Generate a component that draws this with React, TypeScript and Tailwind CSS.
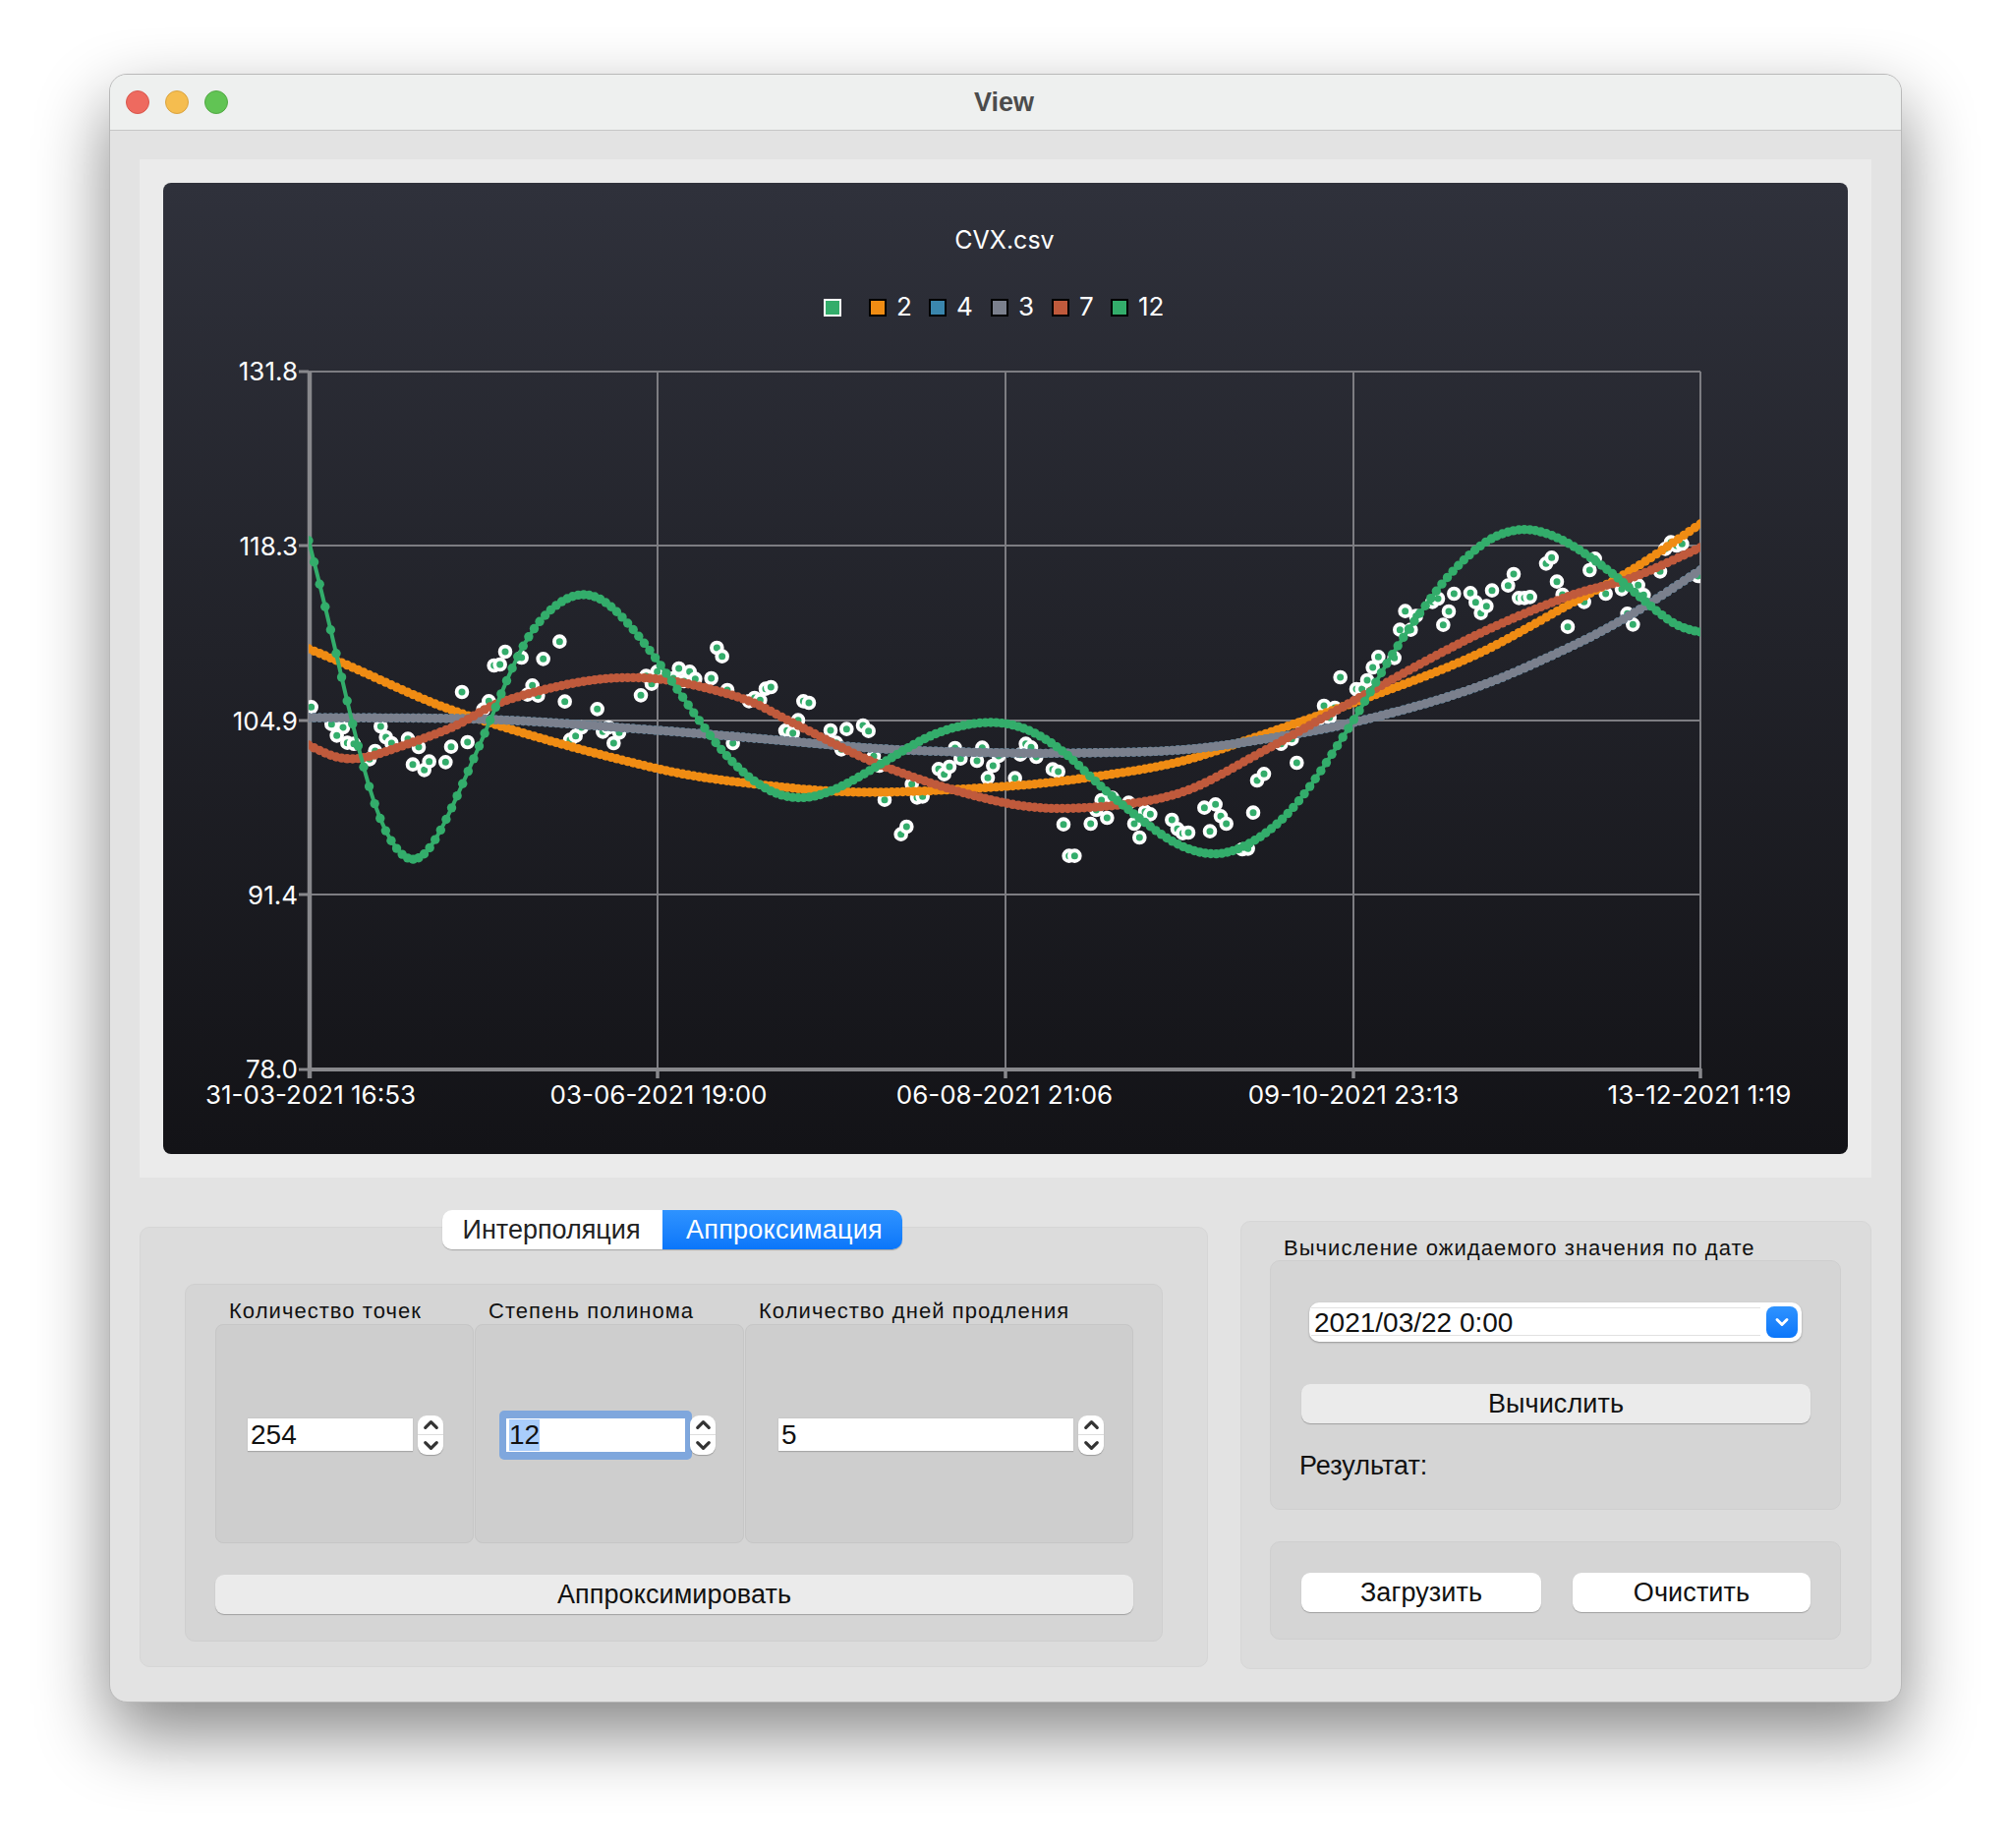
import type { ReactNode } from "react"
import { ChevronDown, ChevronUp } from "lucide-react"

type Pt = [number, number]

// read off the chart by eye, in page coordinates
const ORANGE: Pt[] = [[314,660],[345,673],[467,725],[669,782],[780,799],[880,806],[1023,800],[1100,792],[1200,775],[1280,749],[1377,715],[1500,667],[1600,613],[1660,580],[1730,533]]
const GRAY: Pt[] = [[314,730],[500,732],[669,743],[780,752],[900,762],[1023,766],[1100,766],[1200,763],[1280,753],[1377,735],[1500,700],[1600,657],[1660,625],[1730,580]]
const RED: Pt[] = [[314,758],[340,770],[365,772],[400,762],[467,737],[500,718],[560,700],[620,690],[680,692],[760,712],[800,732],[900,780],[1023,817],[1100,822],[1200,807],[1280,767],[1377,713],[1500,647],[1600,605],[1660,588],[1730,557]]
const GREEN: Pt[] = [[314,550],[332,621],[350,700],[373,793],[390,843],[418,877],[440,860],[465,810],[500,730],[530,660],[560,620],[592,604],[620,615],[660,660],[700,717],[740,770],[780,803],[815,812],[850,803],[900,775],[950,747],[1000,735],[1040,740],[1080,763],[1120,800],[1160,833],[1200,860],[1240,869],[1280,853],[1320,817],[1377,733],[1420,660],[1470,590],[1500,560],[1520,546],[1552,538],[1580,545],[1600,555],[1640,583],[1680,617],[1707,637],[1730,643]]

const ZOOM_A: Pt[] = [[50,538],[112,590],[147,600],[128,625],[160,647],[180,650],[228,697],[245,672],[262,597],[278,630],[295,648],[345,635],[378,660],[360,713],[395,730],[410,704],[460,706],[477,659],[527,645],[510,492],[575,545],[592,520],[608,411],[626,408],[642,369],[692,387],[710,500],[725,472],[742,503],[758,391],[808,338],[824,521],[923,544],[840,638],[857,626],[875,600],[940,613],[957,600],[990,616],[973,648],[1056,502],[1072,443],[1089,467],[1106,430],[1155,450],[1172,420],[1188,459],[1205,430],[1222,452],[1271,450],[1288,357],[1304,383],[1320,486],[1337,648],[1386,520],[1403,510],[1420,517],[1437,482],[1453,477],[1497,610]]
const ZOOM_B: Pt[] = [[62,430],[80,437],[96,398],[112,340],[129,345],[195,429],[212,467],[228,487],[244,425],[294,414],[311,431],[327,508],[344,537],[360,641],[443,593],[459,634],[476,631],[410,746],[427,723],[525,547],[542,563],[558,540],[575,483],[592,515],[642,522],[658,482],[675,574],[691,537],[708,507],[758,575],[774,503],[791,470],[807,481],[823,510],[873,548],[890,555],[906,716],[923,812],[940,812],[989,714],[1006,672],[1022,642],[1039,696],[1055,635],[1105,650],[1122,714],[1138,756],[1155,677],[1171,685],[1237,702],[1254,730],[1270,743],[1287,741],[1336,665],[1353,737],[1370,655],[1386,691],[1403,714],[1452,792],[1469,790],[1485,680],[1497,582]]
const ZOOM_C: Pt[] = [[18,862],[70,770],[103,755],[118,828],[134,712],[184,695],[201,654],[218,690],[234,660],[251,567],[300,603],[317,603],[333,576],[350,537],[367,505],[416,508],[433,422],[449,365],[466,422],[482,380],[532,337],[549,327],[565,407],[582,366],[598,312],[648,310],[664,338],[680,371],[697,350],[714,302],[763,287],[780,252],[796,325],[813,325],[830,322],[879,220],[896,202],[912,275],[929,315],[945,413],[995,337],[1012,240],[1028,205],[1061,312],[1110,298],[1127,373],[1144,406],[1160,286],[1177,316],[1227,244],[1243,175],[1260,155],[1277,165],[1294,160],[1343,258]]

const SCATTER: Pt[] = [
  ...ZOOM_A.map(([x, y]): Pt => [300 + x / 3, 540 + y / 3]),
  ...ZOOM_B.map(([x, y]): Pt => [780 + x / 3, 600 + y / 3]),
  ...ZOOM_C.map(([x, y]): Pt => [1280 + x / 3, 500 + y / 3]),
]

// cubic Hermite in x through the read points, sampled at 254 evenly spaced x
function dots(pts: Pt[]): Pt[] {
  const slope = (i: number) => {
    const a = pts[Math.max(i - 1, 0)]
    const b = pts[Math.min(i + 1, pts.length - 1)]
    return (b[1] - a[1]) / (b[0] - a[0])
  }
  const raw: number[] = []
  let j = 0
  for (let i = 0; i < 254; i++) {
    const x = 314 + (1416 * i) / 253
    while (j < pts.length - 2 && pts[j + 1][0] < x) j++
    const [ax, ay] = pts[j]
    const [bx, by] = pts[j + 1]
    const h = bx - ax
    const t = (x - ax) / h
    raw.push(
      (2 * t ** 3 - 3 * t ** 2 + 1) * ay +
        (t ** 3 - 2 * t ** 2 + t) * h * slope(j) +
        (-2 * t ** 3 + 3 * t ** 2) * by +
        (t ** 3 - t ** 2) * h * slope(j + 1),
    )
  }
  return raw.map((_, i): Pt => {
    const w = Math.min(2, i, 253 - i)
    let sum = 0
    for (let k = i - w; k <= i + w; k++) sum += raw[k]
    return [314 + (1416 * i) / 253, sum / (2 * w + 1)]
  })
}

const X_LINES = [669, 1023, 1377, 1730]
const Y_LINES = [378, 555, 733, 910]
const Y_LABELS: [number, string][] = [
  [387, "131.8"],
  [565, "118.3"],
  [743, "104.9"],
  [920, "91.4"],
  [1097, "78.0"],
]
const X_LABELS: [number, string][] = [
  [316, "31-03-2021 16:53"],
  [670, "03-06-2021 19:00"],
  [1022, "06-08-2021 21:06"],
  [1377, "09-10-2021 23:13"],
  [1729, "13-12-2021 1:19"],
]
const LEGEND: [number, string, string][] = [
  [884, "#f08c13", "2"],
  [945, "#3a86ad", "4"],
  [1008, "#7b808d", "3"],
  [1070, "#c05a3c", "7"],
  [1130, "#33ad6b", "12"],
]

function Series({ pts, color, width }: { pts: Pt[]; color: string; width: number }) {
  const ds = dots(pts)
  return (
    <g>
      <polyline points={ds.map((p) => p.join(",")).join(" ")} fill="none" stroke={color} strokeWidth={width} />
      {ds.map(([x, y], i) => (
        <circle key={i} cx={x} cy={y} r={4.7} fill={color} />
      ))}
    </g>
  )
}

function Chart() {
  return (
    <div className="h-full rounded-lg bg-gradient-to-b from-[#2f313b] to-[#131317] overflow-hidden">
      {/* svg coordinates are page coordinates, so the numbers read off the picture stay readable */}
      <svg viewBox="166 186 1714 988" className="block w-full h-full" style={{ fontFamily: "Inter, sans-serif" }}>
        <defs>
          <clipPath id="plot">
            <rect x="314" y="378" width="1416" height="709" />
          </clipPath>
        </defs>

        <text x="1022" y="253" fill="#fff" fontSize="25" textAnchor="middle">CVX.csv</text>

        <rect x="839" y="305" width="16" height="16" fill="#33ad6b" stroke="#fff" strokeWidth="2" />
        {LEGEND.map(([x, color, label]) => (
          <g key={label}>
            <rect x={x + 1} y="305" width="16" height="16" fill={color} stroke="#000" strokeWidth="2" />
            <text x={x + 28} y="321" fill="#fff" fontSize="26">{label}</text>
          </g>
        ))}

        {X_LINES.map((x) => (
          <line key={x} x1={x} x2={x} y1="378" y2="1087" stroke="#7d7d82" strokeWidth="2" />
        ))}
        {Y_LINES.map((y) => (
          <line key={y} x1="314" x2="1730" y1={y} y2={y} stroke="#7d7d82" strokeWidth="2" />
        ))}
        <line x1="315" x2="315" y1="378" y2="1097" stroke="#88888c" strokeWidth="4.5" />
        <line x1="314" x2="1731" y1="1088" y2="1088" stroke="#88888c" strokeWidth="4" />
        {[378, 555, 733, 910, 1088].map((y) => (
          <line key={y} x1="304" x2="314" y1={y} y2={y} stroke="#88888c" strokeWidth="3" />
        ))}
        {[669, 1023, 1377, 1730].map((x) => (
          <line key={x} x1={x} x2={x} y1="1087" y2="1097" stroke="#88888c" strokeWidth="3.5" />
        ))}

        <g clipPath="url(#plot)">
          {SCATTER.map(([x, y], i) => (
            <circle key={i} cx={x} cy={y} r={5.4} fill="#33ad6b" stroke="#fff" strokeWidth="3.8" />
          ))}
          <Series pts={ORANGE} color="#f08c13" width={5} />
          <Series pts={GRAY} color="#3a86ad" width={5} />
          <Series pts={GRAY} color="#7b808d" width={5} />
          <Series pts={RED} color="#c05a3c" width={5} />
          <Series pts={GREEN} color="#33ad6b" width={4} />
        </g>

        {Y_LABELS.map(([y, label]) => (
          <text key={label} x="303" y={y} fill="#fff" fontSize="26" textAnchor="end">{label}</text>
        ))}
        {X_LABELS.map(([x, label]) => (
          <text key={label} x={x} y="1123" fill="#fff" fontSize="26" textAnchor="middle">{label}</text>
        ))}
      </svg>
    </div>
  )
}

function Spinner({ className = "" }: { className?: string }) {
  return (
    <div className={`relative flex flex-col h-[40px] w-[26px] rounded-[9px] bg-white shadow-[0_1px_1px_rgba(0,0,0,0.25)] ${className}`}>
      <div className="h-[20px] flex items-center justify-center border-b border-[#dcdcdc]">
        <ChevronUp size={23} strokeWidth={3.4} className="shrink-0 text-[#333]" />
      </div>
      <div className="h-[20px] flex items-center justify-center">
        <ChevronDown size={23} strokeWidth={3.4} className="shrink-0 text-[#333]" />
      </div>
    </div>
  )
}

function NumberBox({ value, width }: { value: string; width: string }) {
  return (
    <div className={`h-[34px] ${width} bg-white border-b border-[#a8a8a8] pl-[3px] text-[28px] leading-[34px] text-[#111] shadow-[0_0_1px_rgba(0,0,0,0.2)]`}>
      {value}
    </div>
  )
}

function GroupLabel({ children }: { children: string }) {
  return <div className="h-[40px] pl-[14px] pt-[10px] text-[22px] leading-[34px] tracking-[1.05px] text-[#111] whitespace-nowrap">{children}</div>
}

function SubBox({ children }: { children: ReactNode }) {
  return (
    <div className="h-[223px] rounded-[8px] border border-[#c6c6c6] bg-[#cecece] flex items-center pt-[3px]">
      {children}
    </div>
  )
}

function PushButton({ label, className }: { label: string; className: string }) {
  return (
    <div className={`h-[40px] rounded-[9px] shadow-[0_1px_1px_rgba(0,0,0,0.25)] flex items-center justify-center text-[27px] tracking-[0.1px] text-[#111] ${className}`}>
      {label}
    </div>
  )
}

export default function App() {
  return (
    <div
      className="w-[2046px] h-[1880px] bg-white pt-[75px] pl-[111px] overflow-hidden"
      style={{ fontFamily: '"Liberation Sans", Arial, sans-serif' }}
    >
      <div className="w-[1824px] h-[1657px] rounded-[18px] overflow-hidden bg-[#e3e3e3] border border-[#b9b9b9] shadow-[0_32px_72px_rgba(0,0,0,0.48)]">
        <div className="relative h-[57px] bg-[#eef0ef] border-b border-[#c6c6c6] flex items-center justify-center">
          <div className="absolute left-[16px] top-[16px] flex gap-[16px]">
            <div className="w-[24px] h-[24px] rounded-full bg-[#ee6a5f] border border-[#d8564c]" />
            <div className="w-[24px] h-[24px] rounded-full bg-[#f5bd4f] border border-[#d9a33f]" />
            <div className="w-[24px] h-[24px] rounded-full bg-[#61c454] border border-[#52a845]" />
          </div>
          <span className="text-[27px] font-bold text-[#4c4c4c] pr-[3px]">View</span>
        </div>

        <div className="mx-[30px] mt-[29px] h-[1036px] bg-[#ebebeb] pt-[24px] pb-[24px] px-[24px]">
          <Chart />
        </div>

        <div className="flex gap-[33px] mt-[44px] ml-[30px]">
          <div className="relative mt-[6px] w-[1087px] h-[448px] rounded-[10px] border border-[#d6d6d6] bg-[#dcdcdc] pt-[57px] pl-[45px]">
            <div className="absolute left-[307px] top-[-18px] flex h-[40px] text-[27px] rounded-[10px] shadow-[0_1px_1px_rgba(0,0,0,0.25)]">
              <div className="w-[224px] rounded-l-[10px] bg-white text-[#222] flex items-center justify-center pr-[2px]">Интерполяция</div>
              <div className="w-[244px] rounded-r-[10px] bg-gradient-to-b from-[#2e93ff] to-[#0a76fa] text-white tracking-[0.25px] flex items-center justify-center pl-[4px]">Аппроксимация</div>
            </div>

            <div className="w-[995px] h-[364px] rounded-[10px] border border-[#cfcfcf] bg-[#d5d5d5] pl-[30px]">
              <div className="flex gap-[1px]">
                <div className="w-[263px]">
                  <GroupLabel>Количество точек</GroupLabel>
                  <SubBox>
                    <div className="flex items-center pl-[32px] gap-[5px]">
                      <NumberBox value="254" width="w-[168px]" />
                      <Spinner />
                    </div>
                  </SubBox>
                </div>
                <div className="w-[274px]">
                  <GroupLabel>Степень полинома</GroupLabel>
                  <SubBox>
                    <div className="flex items-center pl-[24px]">
                      <div className="rounded-[5px] bg-[#7fa7dd] px-[7px] py-[8px]">
                        <div className="h-[34px] w-[182px] bg-white pl-[3px] text-[28px] leading-[34px] text-[#111]">
                          <span className="inline-block h-[32px] leading-[32px] bg-[#a9cdfb]">12</span>
                        </div>
                      </div>
                      <Spinner className="-ml-[2px]" />
                    </div>
                  </SubBox>
                </div>
                <div className="w-[395px]">
                  <GroupLabel>Количество дней продления</GroupLabel>
                  <SubBox>
                    <div className="flex items-center pl-[33px] gap-[5px]">
                      <NumberBox value="5" width="w-[300px]" />
                      <Spinner />
                    </div>
                  </SubBox>
                </div>
              </div>
              <PushButton label="Аппроксимировать" className="mt-[32px] w-[934px] bg-[#ebebeb]" />
            </div>
          </div>

          <div className="relative w-[642px] h-[456px] rounded-[10px] border border-[#d6d6d6] bg-[#dcdcdc] pl-[29px]">
            <div className="h-[39px] pl-[14px] pt-[10px] text-[22px] leading-[34px] tracking-[1.05px] text-[#111] whitespace-nowrap">
              Вычисление ожидаемого значения по дате
            </div>
            <div className="w-[581px] h-[254px] rounded-[10px] border border-[#cfcfcf] bg-[#d5d5d5] pl-[31px] pt-[42px]">
              <div className="relative ml-[8px] w-[501px] h-[40px] rounded-[10px] bg-white shadow-[0_1px_2px_rgba(0,0,0,0.3)] pl-[2px] pt-[5px]">
                <div className="h-[29px] w-[457px] border-y border-[#e2e2e2] pl-[3px] text-[28px] leading-[29px] text-[#111]">2021/03/22 0:00</div>
                <div className="absolute right-[4px] top-[4px] w-[32px] h-[32px] rounded-[8px] bg-gradient-to-b from-[#2e93ff] to-[#0a76fa] flex items-center justify-center">
                  <ChevronDown size={20} strokeWidth={3.5} className="text-white" />
                </div>
              </div>
              <PushButton label="Вычислить" className="mt-[43px] w-[518px] bg-[#ebebeb]" />
              <div className="mt-[25px] -ml-[2px] text-[27px] leading-[36px] text-[#111]">Результат:</div>
            </div>
            <div className="mt-[32px] w-[581px] h-[100px] rounded-[10px] border border-[#cfcfcf] bg-[#d5d5d5] pl-[31px] pt-[31px] flex gap-[32px]">
              <PushButton label="Загрузить" className="w-[244px] bg-white" />
              <PushButton label="Очистить" className="w-[242px] bg-white" />
            </div>
          </div>
        </div>
      </div>
    </div>
  )
}
